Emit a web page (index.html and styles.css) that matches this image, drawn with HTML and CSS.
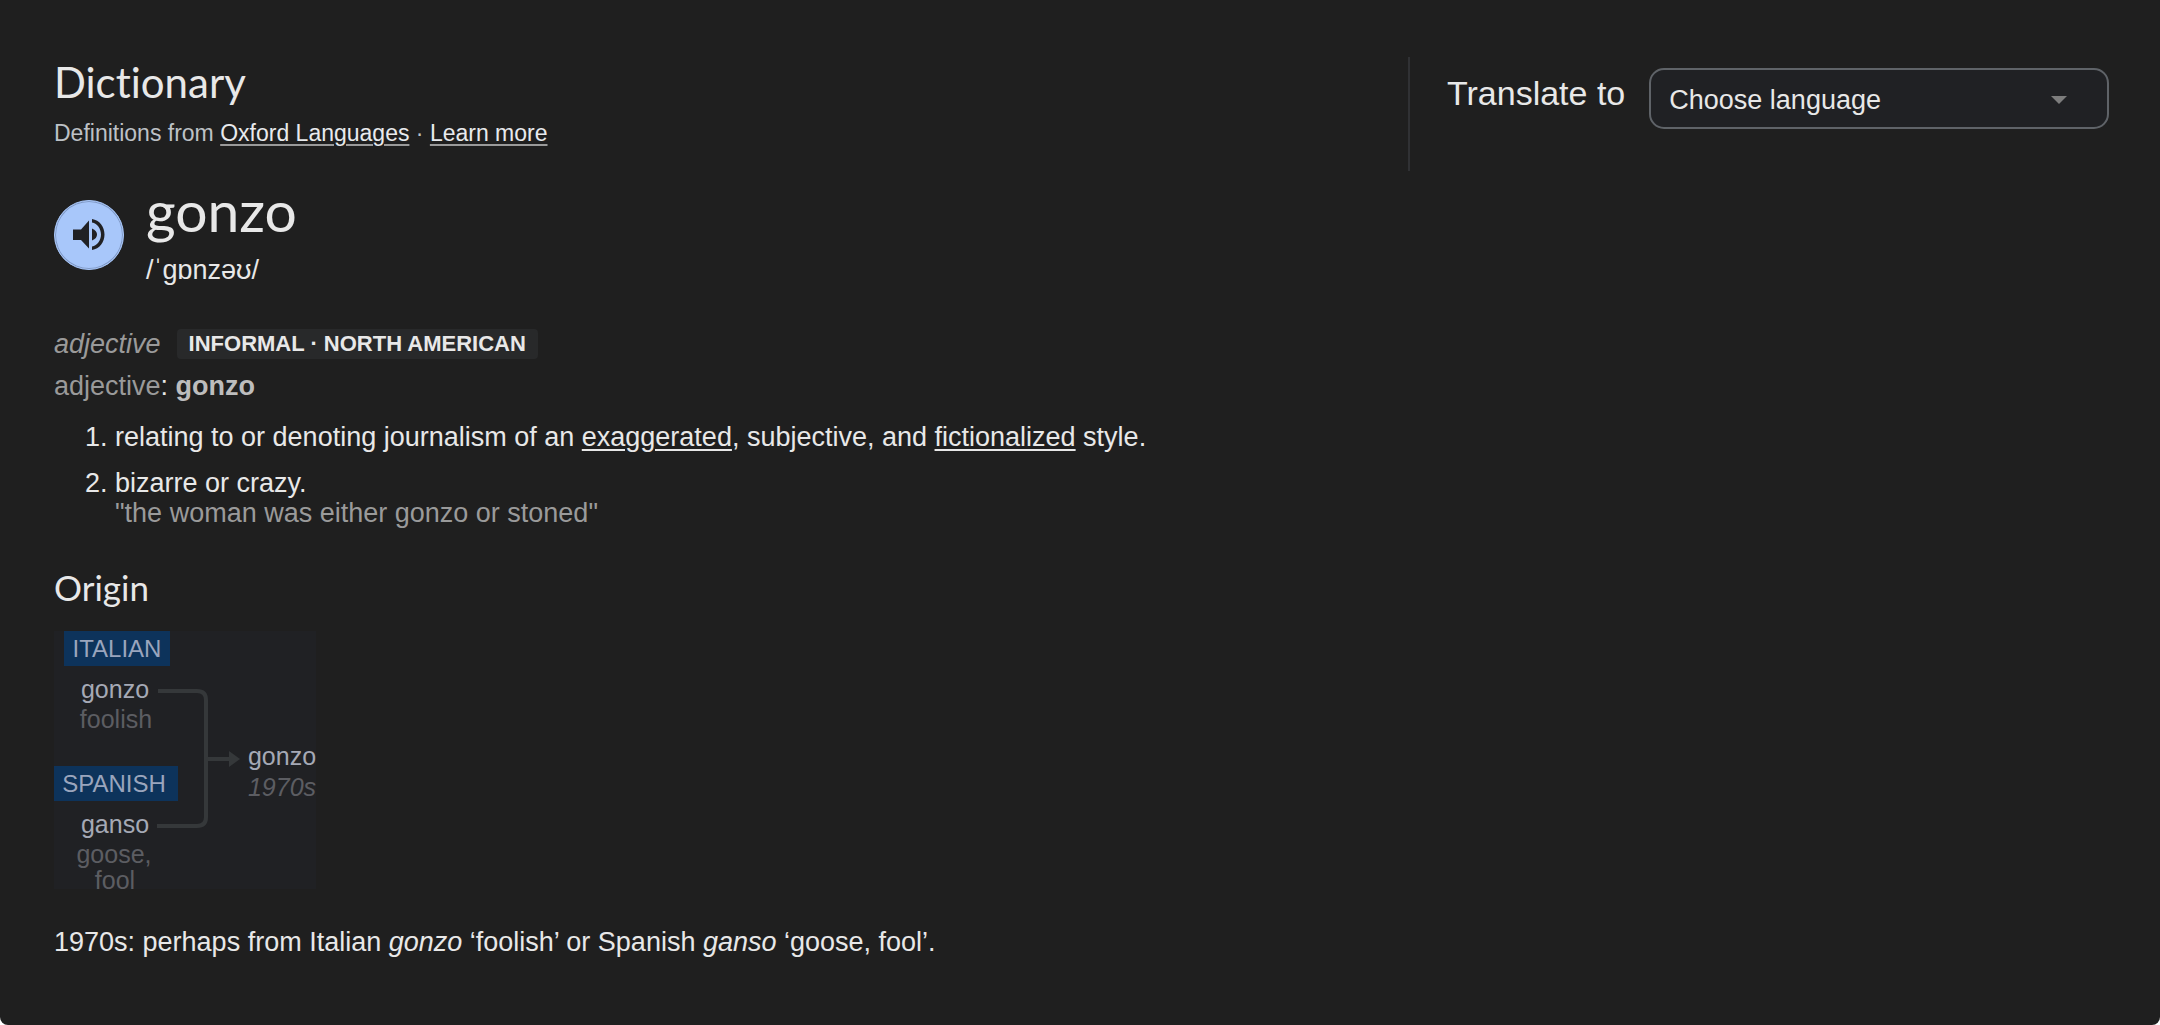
FILE: index.html
```html
<!DOCTYPE html>
<html lang="en">
<head>
    <meta charset="UTF-8">
    <meta name="viewport" content="width=device-width, initial-scale=1.0">
    <title>gonzo - Dictionary</title>
    <link rel="stylesheet" href="styles.css">
</head>
<body>
    <main class="card">
        <div class="entry">
            <h1>Dictionary</h1>
            <p class="source">Definitions from <a href="#">Oxford Languages</a> · <a href="#">Learn more</a></p>

            <div class="headword">
                <button class="speak" type="button" aria-label="Listen">
                    <svg viewBox="0 0 32 32" width="32" height="32" fill="#202124">
                        <path d="M0 10.500h8L16 1.500v28L8 21H0z"/>
                        <path d="M19 9.500c3.500 1.500 5 3.500 5 6s-1.500 4.500-5 6z"/>
                        <path d="M19 0c7.500 1 12.500 8 12.500 15.500S26.500 30 19 31v-3.500c5.500-1 9-6.500 9-12S24.500 4.500 19 3.500z"/>
                    </svg>
                </button>
                <div>
                    <h2 class="word">gonzo</h2>
                    <p class="phonetic">/ˈɡɒnzəʊ/</p>
                </div>
            </div>

            <div class="pos"><i>adjective</i><span class="label">INFORMAL · NORTH AMERICAN</span></div>
            <p class="forms"><span class="muted">adjective</span>: <b>gonzo</b></p>

            <ol class="senses">
                <li>relating to or denoting journalism of an <a href="#">exaggerated</a>, subjective, and <a href="#">fictionalized</a> style.</li>
                <li>bizarre or crazy.<q>the woman was either gonzo or stoned</q></li>
            </ol>

            <h3>Origin</h3>
            <svg class="origin-tree" viewBox="0 0 264 264" width="264" height="264">
                <rect class="tree-bg" width="262" height="258"/>
                <rect class="tag" x="10" width="106" height="35"/>
                <text class="lang" x="63" y="26">ITALIAN</text>
                <text class="root" x="61" y="67">gonzo</text>
                <text class="gloss" x="62" y="97">foolish</text>
                <rect class="tag" y="135" width="124" height="35"/>
                <text class="lang" x="60" y="161">SPANISH</text>
                <text class="root" x="61" y="202">ganso</text>
                <text class="gloss" x="60" y="232">goose,</text>
                <text class="gloss" x="61" y="258">fool</text>
                <path class="link" d="M104 60h39q9 0 9 9v117q0 9-9 9h-40M152 128h26"/>
                <path class="arrow" d="M175 120l11 8-11 8z"/>
                <text class="root" x="228" y="134">gonzo</text>
                <text class="gloss year" x="228" y="165">1970s</text>
            </svg>
            <p class="etymology">1970s: perhaps from Italian <i>gonzo</i> ‘foolish’ or Spanish <i>ganso</i> ‘goose, fool’.</p>
        </div>

        <div class="translate">
            <label for="language">Translate to</label>
            <div class="select-wrap">
                <select id="language">
                    <option>Choose language</option>
                    <option>French</option>
                    <option>Italian</option>
                    <option>Spanish</option>
                </select>
            </div>
        </div>
    </main>
</body>
</html>
```
FILE: styles.css
```css
* {
    box-sizing: border-box;
    margin: 0;
    padding: 0;
}

body {
    background: #fff;
    color: #e8e8e8;
    font-family: "Liberation Sans", Arial, sans-serif;
    font-size: 27px;
    line-height: 30px;
}

.card {
    display: grid;
    grid-template-columns: 1354fr 701fr;
    align-items: start;
    min-height: 100vh;
    padding: 57px 51px 48px 54px;
    background: #1f1f1f;
    border-radius: 0 0 8px 8px;
}

h1, h2, h3 {
    font-family: Lato, sans-serif;
    font-weight: 400;
    font-variant-ligatures: none;
}

h1 {
    font-size: 42px;
    line-height: 50px;
}

a {
    color: inherit;
    text-underline-offset: 3px;
    text-decoration-thickness: 2px;
}

.source {
    margin-top: 11px;
    font-size: 23px;
    color: #bdc1c6;
}

.source a {
    color: #e8eaed;
    text-decoration-color: #9a9a9a;
}

.headword {
    display: flex;
    align-items: flex-start;
    gap: 22px;
    margin-top: 29px;
}

.speak {
    display: flex;
    align-items: center;
    justify-content: center;
    width: 70px;
    height: 70px;
    margin-top: 23px;
    border: 1px solid #a8c7fa;
    border-radius: 50%;
    background: #a8c7fa;
    box-shadow: inset 0 0 0 1px #7f98c4;
    cursor: pointer;
}

.word {
    font-size: 57px;
    line-height: 66px;
}

.phonetic {
    margin-top: 12px;
}

.pos {
    display: flex;
    align-items: center;
    gap: 16px;
    margin-top: 44px;
    color: #9a9a9a;
}

.label {
    padding: 0 12px;
    border-radius: 4px;
    background: #28292a;
    color: #e8e8e8;
    font-size: 22px;
    font-weight: bold;
}

.forms {
    margin-top: 12px;
}

.muted {
    color: #9a9a9a;
}

.forms b {
    color: #bdbdbd;
}

.senses {
    margin-top: 21px;
    padding-left: 61px;
}

.senses li + li {
    margin-top: 16px;
}

q {
    display: block;
    color: #9a9a9a;
    quotes: '"' '"';
}

h3 {
    margin-top: 38px;
    font-size: 35px;
    line-height: 42px;
}

.origin-tree {
    display: block;
    margin-top: 23px;
    font-size: 25px;
    text-anchor: middle;
}

.tree-bg {
    fill: #202124;
}

.tag {
    fill: #0d335b;
}

.lang {
    fill: #9aa5bd;
    font-size: 24px;
}

.root {
    fill: #a5a9b5;
}

.gloss {
    fill: #5c5d62;
}

.year {
    font-style: italic;
}

.link {
    fill: none;
    stroke: #35383a;
    stroke-width: 4;
}

.arrow {
    fill: #35383a;
}

.etymology {
    margin-top: 32px;
}

.translate {
    display: flex;
    align-items: flex-start;
    gap: 24px;
    min-height: 114px;
    padding: 11px 0 0 37px;
    border-left: 2px solid #303134;
}

.translate label {
    padding-top: 5px;
    font-size: 34px;
    line-height: 40px;
    white-space: nowrap;
}

.select-wrap {
    position: relative;
    flex: 1;
}

.select-wrap::after {
    content: "";
    position: absolute;
    top: 28px;
    right: 42px;
    border: 8px solid transparent;
    border-top-color: #7d7d7d;
    border-bottom: 0;
    pointer-events: none;
}

select {
    appearance: none;
    display: block;
    width: 100%;
    height: 61px;
    padding: 2px 18px 0;
    border: 2px solid #5f6368;
    border-radius: 15px;
    background: #202124;
    color: inherit;
    font: inherit;
}
```
